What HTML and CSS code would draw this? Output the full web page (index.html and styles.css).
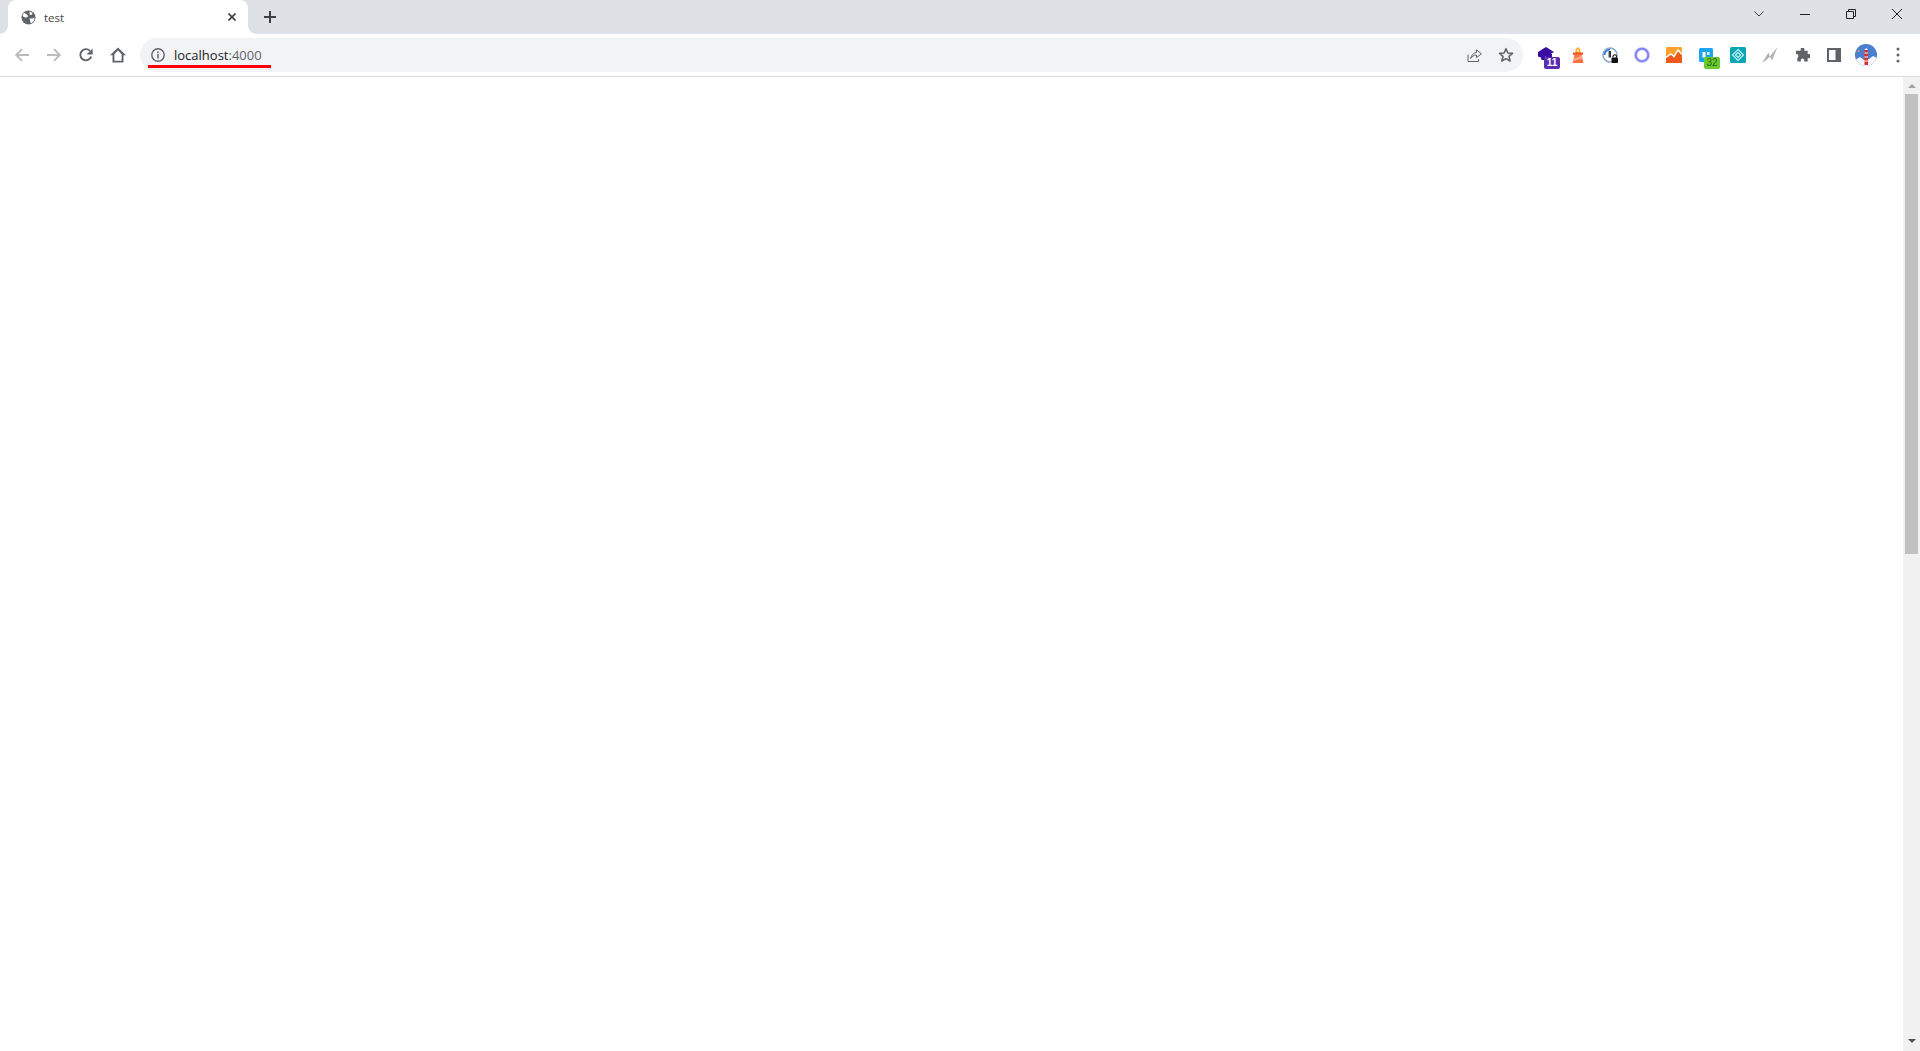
FILE: index.html
```html
<!DOCTYPE html>
<html lang="en">
<head>
<meta charset="utf-8">
<title>test</title>
<link rel="stylesheet" href="styles.css">
</head>
<body>
<div class="browser">
  <header class="tabstrip">
    <div class="tab">
      <svg class="favicon" viewBox="0 0 16 16"><circle cx="8" cy="8" r="7.500" fill="#5f6368"/><path d="M3 3l3 1.500 1.500 2-1.200 1.600L4.200 8 1.500 6.500zM9 1.500l3.400 1.700-1 1.800-2 .4zM9 9h3l2.500-1-.5 3-2.600 3-1.400-.4-.4-3z" fill="#fff"/></svg>
      <span class="tab-title">test</span>
      <svg class="tab-close" viewBox="0 0 8 8"><path d="M.5.5l7 7M7.500.5l-7 7" stroke="#3c4043" stroke-width="1.600" fill="none"/></svg>
    </div>
    <svg class="newtab" viewBox="0 0 12 12"><path d="M6 0v12M0 6h12" stroke="#3c4043" stroke-width="2" fill="none"/></svg>
    <div class="window-controls">
      <svg class="wc wc-chevron" viewBox="0 0 10 6"><path d="M.4.4L5 5l4.600-4.600" stroke="#3c4043" stroke-width="1" fill="none"/></svg>
      <svg class="wc wc-min" viewBox="0 0 10 10"><path d="M0 5.500h10" stroke="#202124" stroke-width="1" fill="none"/></svg>
      <svg class="wc wc-restore" viewBox="0 0 10 10"><path d="M2.500 2.500V.5h7v7h-2M.5 2.500h7v7h-7z" stroke="#202124" stroke-width="1" fill="none"/></svg>
      <svg class="wc wc-close" viewBox="0 0 10 10"><path d="M0 0l10 10M10 0L0 10" stroke="#202124" stroke-width="1" fill="none"/></svg>
    </div>
  </header>
  <nav class="toolbar">
    <div class="nav-buttons">
      <svg class="nav-icon" viewBox="0 0 16 16"><path d="M15 8H2.500M8 2.200L2.200 8 8 13.800" stroke="#b9bbbe" stroke-width="1.900" fill="none"/></svg>
      <svg class="nav-icon" viewBox="0 0 16 16"><path d="M1 8h12.500M8 2.200L13.800 8 8 13.800" stroke="#b9bbbe" stroke-width="1.900" fill="none"/></svg>
      <svg class="nav-icon" viewBox="0 0 16 16"><path d="M13.200 9.600A5.600 5.600 0 1 1 12 3.900" stroke="#5f6368" stroke-width="1.900" fill="none"/><path d="M14.600 1.400v6h-6z" fill="#5f6368"/></svg>
      <svg class="nav-icon" viewBox="0 0 16 16"><path d="M8 .4L0 8.300h2.500V15.600h11V8.300H16zM8 3.500l3.600 3.700v6.500H4.400V7.200z" fill="#5f6368" fill-rule="evenodd"/></svg>
    </div>
    <div class="omnibox">
      <svg class="info" viewBox="0 0 14 14"><circle cx="7" cy="7" r="6.200" stroke="#5f6368" stroke-width="1.400" fill="none"/><path d="M7 6v4.400M7 3.400v1.500" stroke="#5f6368" stroke-width="1.500" fill="none"/></svg>
      <span class="url"><span class="host">localhost</span><span class="port">:4000</span></span>
      <span class="url-mark"></span>
      <svg class="omni-icon" viewBox="0 0 16 16"><path d="M2 7.500V14.500H12.500V12" stroke="#5f6368" stroke-width="1" fill="none"/><path d="M4.700 11.500C5.300 8 7.600 5.800 10.500 5.500V2.800L15.400 6.800 10.500 10.600V8C8 8 6.200 9.300 4.700 11.500Z" stroke="#5f6368" stroke-width="1" fill="none" stroke-linejoin="round"/></svg>
      <svg class="omni-icon" viewBox="0 0 16 16"><path d="M8 1.700l1.900 4.300 4.600.4-3.500 3 1.100 4.600L8 11.600l-4.100 2.400L5 9.400l-3.500-3 4.600-.4z" stroke="#5f6368" stroke-width="1.600" fill="none" stroke-linejoin="round"/></svg>
    </div>
    <div class="extensions">
      <div class="ext">
        <svg class="ext-svg" viewBox="0 0 16 16"><path d="M8 0l8 5-8 5-8-5z" fill="#3a0ca3"/><path d="M0 5h7v8H3.500L3 10.500 0 9.500z" fill="#3a0ca3"/><path d="M8 7h6v6H8z" fill="#3a0ca3"/></svg>
        <span class="badge badge-purple">11</span>
      </div>
      <div class="ext">
        <svg class="ext-svg" viewBox="0 0 16 16"><path d="M8 0l2.500 2.500v3.500h-5V2.500z" fill="#f9a825"/><circle cx="8" cy="3.500" r="1.200" fill="#fff3c4"/><path d="M3 5.500h10v2.300H3z" fill="#f4511e"/><path d="M4.500 7.800h7L13.500 16h-11z" fill="#ff7043"/><path d="M3.600 11.500l8.200-2.700.6 2.500-9.400 3z" fill="#ffab91"/></svg>
      </div>
      <div class="ext">
        <svg class="ext-svg" viewBox="0 0 16 16"><circle cx="8" cy="8" r="7" fill="#fff" stroke="#8aa6c8" stroke-width="1.500"/><path d="M2.600 8A5.400 5.400 0 0 1 8 2.600" stroke="#2b7de1" stroke-width="1.800" fill="none"/><rect x="6.600" y="4" width="2.400" height="6.500" fill="#33373d"/><rect x="9.500" y="10.500" width="6.500" height="5.500" rx="1" fill="#111"/><path d="M11 10.500V9.200a1.800 1.800 0 0 1 3.500 0v1.300" stroke="#111" stroke-width="1.100" fill="none"/></svg>
      </div>
      <div class="ext">
        <svg class="ext-svg" viewBox="0 0 16 16"><circle cx="8" cy="8" r="6.300" stroke="#c9c9fb" stroke-width="3.400" fill="none"/><circle cx="8" cy="8" r="6.300" stroke="#7f7ff5" stroke-width="1.800" fill="none"/></svg>
      </div>
      <div class="ext">
        <svg class="ext-svg" viewBox="0 0 16 16"><rect width="16" height="16" rx="1.500" fill="#f9a12a"/><path d="M0 16V10.500L5 7l3 2.500L12 3l4 4.500V16z" fill="#ef5a1c"/><path d="M0 10.500L5 7l3 2.500L12 3l4 4.500" stroke="#fff" stroke-width="1.500" fill="none"/></svg>
      </div>
      <div class="ext">
        <svg class="ext-svg" viewBox="0 0 16 16"><rect width="14" height="14" x="1" y="1" rx="1.500" fill="#18a6f0"/><path d="M4.500 5v5.500h3V5zM9 5v3h2.500V5z" fill="#fff"/></svg>
        <span class="badge badge-green">32</span>
      </div>
      <div class="ext">
        <svg class="ext-svg" viewBox="0 0 16 16"><rect width="16" height="16" rx="1.500" fill="#0aa6b5"/><path d="M8 2.500L13.500 8 8 13.500 2.500 8zM8 5.500L5.500 8 8 10.500 10.500 8z" fill="none" stroke="#bfeff2" stroke-width="1.200"/></svg>
      </div>
      <div class="ext">
        <svg class="ext-svg" viewBox="0 0 16 16"><path d="M0 16L6.500 5.500 7.800 9.500 15.500 0 10 13.500 8 9.800 3 14z" fill="#b0b2b5"/></svg>
      </div>
      <div class="ext ext-puzzle">
        <svg class="ext-svg" viewBox="0 0 16 16"><path d="M6 1.500a2 2 0 0 1 4 0V3h3.500v3.500H15a2.200 2.200 0 0 1 0 4.400h-1.500v3.600H9.800V13a1.800 1.800 0 0 0-3.600 0v1.500H2.500v-3.600H1.300a2.200 2.200 0 0 0 .2-4.400H1V3h5z" fill="#5f6368"/></svg>
      </div>
      <div class="ext">
        <svg class="panel" viewBox="0 0 14 14"><path d="M0 0h14v14H0zM2 2v10h6.500V2z" fill="#5f6368" fill-rule="evenodd"/></svg>
      </div>
      <div class="ext">
        <svg class="avatar" viewBox="0 0 22 22"><defs><clipPath id="av"><circle cx="11" cy="11" r="11"/></clipPath></defs><g clip-path="url(#av)"><rect width="22" height="22" fill="#4a7fd0"/><path d="M0 16l5-3 4 3 5-1 4-3 4 2v8H0z" fill="#f4f7fb"/><rect x="9.500" y="6" width="3.500" height="15" fill="#d32f2f"/><path d="M9.500 9h3.500M9.500 13h3.500M9.500 17h3.500" stroke="#fff" stroke-width="1"/><path d="M9.500 6l1.750-2L13 6z" fill="#fff"/><circle cx="3.500" cy="7" r="1" fill="#f9a825"/></g></svg>
      </div>
      <div class="ext">
        <svg class="kebab" viewBox="0 0 4 16"><circle cx="2" cy="2" r="1.500" fill="#5f6368"/><circle cx="2" cy="8" r="1.500" fill="#5f6368"/><circle cx="2" cy="14" r="1.500" fill="#5f6368"/></svg>
      </div>
    </div>
  </nav>
  <div class="viewport">
    <main class="page"></main>
    <aside class="scrollbar">
      <svg class="arrow arrow-up" viewBox="0 0 8 4"><path d="M4 0l4 4H0z" fill="#a3a3a3"/></svg>
      <div class="thumb"></div>
      <div class="track"></div>
      <svg class="arrow arrow-down" viewBox="0 0 8 4"><path d="M4 4l4-4H0z" fill="#505050"/></svg>
    </aside>
  </div>
</div>
</body>
</html>
```
FILE: styles.css
```css
* { box-sizing: border-box; }
html, body { margin: 0; height: 100%; overflow: hidden; background: #fff; }
body { font-family: "Open Sans", "Noto Sans", sans-serif; }
svg { display: block; flex: none; }
.browser { display: flex; flex-direction: column; height: 1051px; }

.tabstrip { display: flex; align-items: center; height: 34px; padding-left: 8px; background: #dee1e6; flex: none; }
.tab { display: flex; align-items: center; align-self: flex-end; width: 240px; height: 34px; padding: 0 12px 0 13px; background: #fff; border-radius: 8px 8px 0 0; position: relative; }
.tab::before, .tab::after { content: ""; position: absolute; bottom: 0; width: 8px; height: 8px; }
.tab::before { left: -8px; background: radial-gradient(circle at 0 0, #dee1e6 7.5px, #fff 8px); }
.tab::after { right: -8px; background: radial-gradient(circle at 100% 0, #dee1e6 7.5px, #fff 8px); }
.favicon { width: 15px; height: 15px; }
.tab-title { margin-left: 8px; flex: 1; font-size: 11.5px; color: #45474a; line-height: 16px; padding-top: 2px; }
.tab-close { width: 8px; height: 8px; }
.newtab { width: 12px; height: 12px; margin-left: 16px; }
.window-controls { display: flex; align-items: center; gap: 36px; margin-left: auto; padding-right: 18px; height: 28px; align-self: flex-start; }
.wc { width: 10px; height: 10px; }
.wc-chevron { height: 6px; }

.toolbar { display: flex; align-items: center; height: 43px; padding: 0 0 0 14px; background: #fff; border-bottom: 1px solid #d9dbde; flex: none; }
.nav-buttons { display: flex; align-items: center; gap: 16px; }
.nav-icon { width: 16px; height: 16px; }
.omnibox { display: flex; align-items: center; position: relative; width: 1383px; height: 34px; margin-left: 14px; padding: 0 9px 0 11px; background: #f1f3f4; border-radius: 17px; }
.info { width: 14px; height: 14px; }
.url { flex: 1; margin-left: 9px; font-size: 13px; line-height: 18px; white-space: nowrap; }
.host { color: #202124; }
.port { color: #5f6368; }
.url-mark { position: absolute; left: 8px; top: 27px; width: 123px; height: 3px; background: #f00; }
.omni-icon { width: 16px; height: 16px; margin-left: 16px; }
.info + .url + .url-mark + .omni-icon { margin-left: 0; }

.extensions { display: flex; align-items: center; margin-left: 7px; }
.ext { position: relative; display: flex; align-items: center; justify-content: center; width: 32px; height: 32px; }
.ext-puzzle .ext-svg { width: 15px; height: 15px; }
.ext-svg { width: 16px; height: 16px; }
.panel { width: 14px; height: 14px; }
.avatar { width: 22px; height: 22px; }
.kebab { width: 4px; height: 16px; }
.badge { position: absolute; right: 2px; bottom: 2px; display: block; width: 16px; height: 12px; border-radius: 2px; font-size: 10px; line-height: 12px; text-align: center; font-family: "Liberation Sans", sans-serif; }
.badge-purple { background: #5b2db3; color: #fff; font-weight: 700; }
.badge-green { background: #6bcb2a; color: #2f5d12; }

.viewport { display: flex; flex: 1; min-height: 0; }
.page { flex: 1; background: #fff; }
.scrollbar { display: flex; flex-direction: column; align-items: center; width: 17px; background: #f1f1f1; flex: none; }
.arrow { width: 8px; height: 4px; }
.arrow-up { margin: 7px 0 6px; }
.arrow-down { margin: 5px 0 8px; }
.thumb { width: 13px; height: 460px; background: #c1c1c1; }
.track { flex: 1; }
```
